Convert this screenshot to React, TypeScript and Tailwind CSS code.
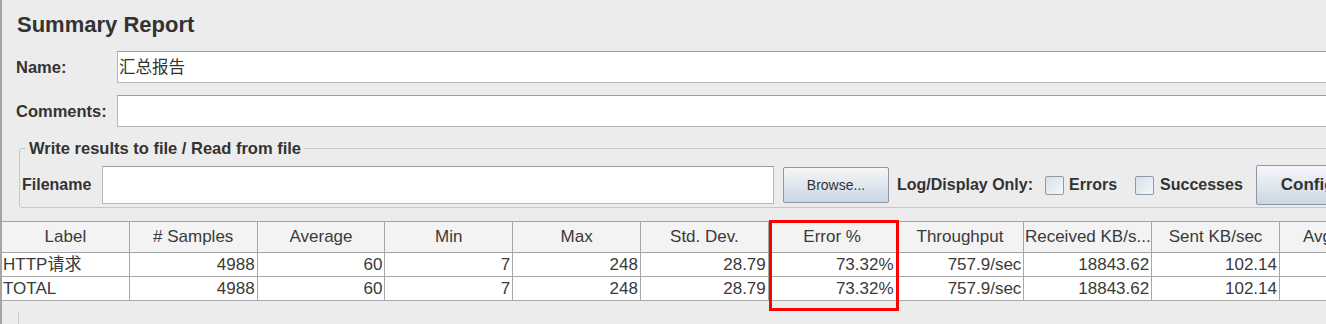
import React from "react";

const columns = [
  "Label",
  "# Samples",
  "Average",
  "Min",
  "Max",
  "Std. Dev.",
  "Error %",
  "Throughput",
  "Received KB/s...",
  "Sent KB/sec",
  "Avg. Bytes",
];

const rows = [
  ["HTTP请求", "4988", "60", "7", "248", "28.79", "73.32%", "757.9/sec", "18843.62", "102.14", "25455.2"],
  ["TOTAL", "4988", "60", "7", "248", "28.79", "73.32%", "757.9/sec", "18843.62", "102.14", "25455.2"],
];

function TextField({ value, className }: { value?: string; className?: string }) {
  return (
    <div
      className={`flex items-center bg-white border border-[#b4b7bc] border-t-[#9a9da3] pl-[1px] text-[16.5px] ${className ?? ""}`}
    >
      {value}
    </div>
  );
}

function Checkbox() {
  return (
    <div className="h-[19px] w-[19px] rounded-[2px] border border-[#8e9aa6] bg-gradient-to-br from-[#d6dfe8] to-[#f6f8fa]" />
  );
}

export default function App() {
  return (
    <div className="relative h-[324px] w-[1326px] overflow-hidden border-l-2 border-[#a5a5a5] bg-[#ececec] font-['Liberation_Sans','Noto_Sans_CJK_SC',sans-serif] text-[#333]">
      <div className="pl-[15px] pt-[12px] text-[22px] font-bold leading-[26px]">Summary Report</div>

      <div className="mt-[13px] flex items-center pl-[14px]">
        <span className="w-[101px] text-[16.5px] font-bold">Name:</span>
        <TextField value="汇总报告" className="-mr-4 h-[32px] flex-1" />
      </div>
      <div className="mt-[12px] flex items-center pl-[14px]">
        <span className="w-[101px] text-[16.5px] font-bold">Comments:</span>
        <TextField className="-mr-4 h-[32px] flex-1" />
      </div>

      <fieldset className="ml-[17px] mt-[11px] w-[1400px] rounded-[3px] border border-[#c3c8ce] pb-[2px] pl-[2px]">
        <legend className="ml-[4px] px-[3px] text-[16.5px] font-bold leading-[20px]">
          Write results to file / Read from file
        </legend>
        <div className="mt-[7px] flex h-[40px] items-center whitespace-nowrap">
          <span className="w-[80px] text-[16px] font-bold">Filename</span>
          <TextField className="h-[38px] w-[672px]" />
          <button className="ml-[9px] h-[36px] w-[106px] rounded-[2px] border border-[#8b97a4] bg-gradient-to-b from-[#f6f7f9] to-[#cad7e4] text-[14px]">
            Browse...
          </button>
          <span className="ml-[8px] text-[16px] font-bold">Log/Display Only:</span>
          <div className="ml-[12px]">
            <Checkbox />
          </div>
          <span className="ml-[5px] text-[16px] font-bold">Errors</span>
          <div className="ml-[18px]">
            <Checkbox />
          </div>
          <span className="ml-[6px] text-[16px] font-bold">Successes</span>
          <button className="ml-[13px] h-[40px] rounded-[2px] border border-[#8b97a4] bg-gradient-to-b from-[#f6f7f9] to-[#cad7e4] px-[24px] text-[17px] font-bold">
            Configure
          </button>
        </div>
      </fieldset>

      <div className="mt-[13px] grid grid-cols-[repeat(11,127.8px)] text-[17px] whitespace-nowrap text-[#3a3a3a]">
        {columns.map((c) => (
          <div
            key={c}
            className="flex h-[32px] items-center justify-center overflow-hidden border-b border-r border-t border-[#a4a4a4] bg-[#f3f3f3]"
          >
            {c}
          </div>
        ))}
        {rows.map((r, ri) =>
          r.map((v, ci) => (
            <div
              key={`${ri}-${ci}`}
              className={`flex h-[24px] items-center overflow-hidden border-b border-r border-[#a8a8a8] bg-white ${
                ci === 0 ? "pl-[1px]" : "justify-end pr-[2px]"
              }`}
            >
              {v}
            </div>
          ))
        )}
      </div>

      <div className="ml-[16px] mt-[10px] h-[20px] border-l border-[#cfcfcf]" />

      <div className="absolute left-[767px] top-[220px] h-[91px] w-[130px] border-[3px] border-[#ff0000]" />
    </div>
  );
}
